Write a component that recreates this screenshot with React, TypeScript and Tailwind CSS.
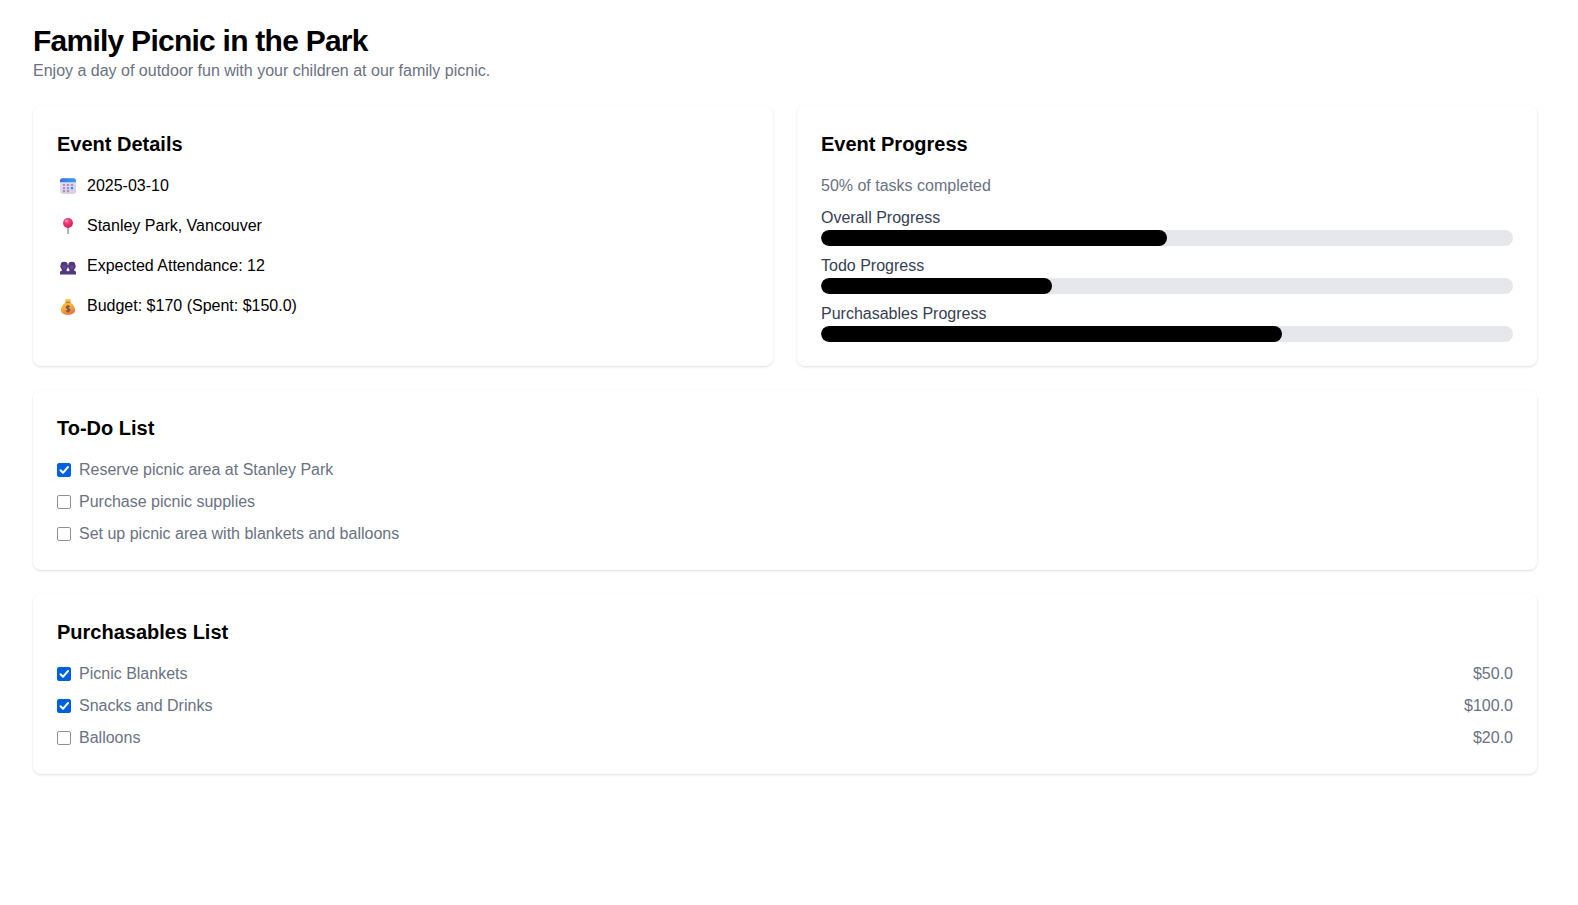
import { useState, type ReactNode } from "react";

type Item = { id: string; name: string; done: boolean; cost?: string };

const todos: Item[] = [
  { id: "reserve", name: "Reserve picnic area at Stanley Park", done: true },
  { id: "supplies", name: "Purchase picnic supplies", done: false },
  { id: "setup", name: "Set up picnic area with blankets and balloons", done: false },
];

const purchasables: Item[] = [
  { id: "blankets", name: "Picnic Blankets", done: true, cost: "$50.0" },
  { id: "snacks", name: "Snacks and Drinks", done: true, cost: "$100.0" },
  { id: "balloons", name: "Balloons", done: false, cost: "$20.0" },
];

const progress = [
  { label: "Overall Progress", value: 50 },
  { label: "Todo Progress", value: 33.33 },
  { label: "Purchasables Progress", value: 66.67 },
];

function CalendarIcon() {
  return (
    <svg viewBox="0 0 22 24" className="h-6 w-[22px] shrink-0" aria-hidden="true">
      <defs>
        <linearGradient id="cal-top" x1="0" x2="1">
          <stop offset="0" stopColor="#3d6fe8" />
          <stop offset="1" stopColor="#38a0f5" />
        </linearGradient>
        <linearGradient id="cal-page" x1="0" x2="1" y1="0" y2="1">
          <stop offset="0" stopColor="#e8e0f6" />
          <stop offset="1" stopColor="#dccbea" />
        </linearGradient>
      </defs>
      <rect x="3" y="4.300" width="16" height="15.700" rx="2.500" fill="url(#cal-page)" />
      <path d="M3 8.300V6.800a2.500 2.500 0 0 1 2.500-2.500h11A2.500 2.500 0 0 1 19 6.800v1.500Z" fill="url(#cal-top)" />
      <g fill="#a295b8">
        <rect x="5.800" y="9.900" width="2.300" height="2.200" rx=".3" />
        <rect x="9.800" y="9.900" width="2.300" height="2.200" rx=".3" />
        <rect x="13.800" y="9.900" width="2.300" height="2.200" rx=".3" />
        <rect x="5.800" y="13" width="2.300" height="2.200" rx=".3" />
        <rect x="9.800" y="13" width="2.300" height="2.200" rx=".3" />
        <rect x="5.800" y="16.100" width="2.300" height="2.200" rx=".3" />
        <rect x="9.800" y="16.100" width="2.300" height="2.200" rx=".3" />
      </g>
      <rect x="13.800" y="13" width="2.300" height="2.200" rx=".3" fill="#1f93ee" />
    </svg>
  );
}

function PinIcon() {
  return (
    <svg viewBox="0 0 22 24" className="h-6 w-[22px] shrink-0" aria-hidden="true">
      <defs>
        <radialGradient id="pin-head" cx="0.4" cy="0.3" r="0.7">
          <stop offset="0" stopColor="#ff6a96" />
          <stop offset="0.5" stopColor="#f0306a" />
          <stop offset="1" stopColor="#c91f62" />
        </radialGradient>
      </defs>
      <path d="M10.300 12h1.600v7.200l-.8 1-.8-1Z" fill="#a9a3b3" />
      <circle cx="11" cy="9" r="4.900" fill="url(#pin-head)" />
      <ellipse cx="9.500" cy="7.100" rx="1.400" ry="1" fill="#ff9ab8" />
    </svg>
  );
}

function PeopleIcon() {
  return (
    <svg viewBox="0 0 22 24" className="h-6 w-[22px] shrink-0" aria-hidden="true">
      <g fill="#533580">
        <path d="M3.600 11.400C3.600 8.800 5 7.800 7.200 7.800s3.600 1 3.600 3.600c.5.200.5 1.700-.1 2-.2 1-.7 1.800-1.300 2.300v.8c1.200.4 1.800.9 1.800 2.100v2H3v-2c0-1.200.8-1.700 2-2.100v-.8c-.6-.5-1.100-1.300-1.300-2.300-.6-.3-.6-1.800-.1-2Z" />
        <path d="M11.200 11.400c0-2.600 1.400-3.600 3.600-3.600s3.600 1 3.600 3.600c.5.200.5 1.700-.1 2-.2 1-.7 1.800-1.300 2.300v.8c1.200.4 2 .9 2 2.100v2h-8.100v-2c0-1.200.7-1.700 1.700-2.100v-.8c-.6-.5-1.100-1.300-1.300-2.300-.6-.3-.6-1.800-.1-2Z" />
      </g>
      <path d="M5.100 11.600h4.100c0 2.200-.5 3.500-2 3.500s-2.100-1.300-2.100-3.500Zm7.700 0h4.100c0 2.200-.6 3.500-2.100 3.500s-2-1.300-2-3.500Z" fill="#67488f" />
    </svg>
  );
}

function MoneyBagIcon() {
  return (
    <svg viewBox="0 0 22 24" className="h-6 w-[22px] shrink-0" aria-hidden="true">
      <defs>
        <linearGradient id="bag-body" x1="0" x2="0.4" y1="0" y2="1">
          <stop offset="0" stopColor="#ffc345" />
          <stop offset="0.6" stopColor="#f6ae3c" />
          <stop offset="1" stopColor="#e67c3e" />
        </linearGradient>
      </defs>
      <path d="M8.300 5.400c1-.5 1.500 0 2.700 0s1.700-.5 2.700 0c.5.400.2 1-.2 1.600L13 8.500c2.800 1.100 5 4.300 5 7.500 0 3.400-2.500 4.700-7 4.700s-7-1.300-7-4.700c0-3.200 2.200-6.400 5-7.500L8.500 7c-.4-.6-.7-1.200-.2-1.600Z" fill="url(#bag-body)" />
      <path d="M8.900 8.300h4.200" stroke="#b3702f" strokeWidth="1" strokeLinecap="round" />
      <path d="M12.700 12.900c-.4-.7-1-.9-1.700-.9-1 0-1.700.5-1.700 1.300 0 1.700 3.500.9 3.500 2.800 0 .9-.8 1.400-1.800 1.400-.9 0-1.500-.3-1.900-1M11 11v7.500" fill="none" stroke="#705548" strokeWidth="1.200" />
    </svg>
  );
}

function Card({ title, children }: { title: string; children: ReactNode }) {
  return (
    <section className="rounded-lg bg-white p-6 shadow-sm">
      <h2 className="mb-4 text-xl font-semibold">{title}</h2>
      {children}
    </section>
  );
}

function Detail({ icon, children }: { icon: ReactNode; children: ReactNode }) {
  return (
    <li className="flex items-center gap-2">
      {icon}
      <span>{children}</span>
    </li>
  );
}

function Checklist({ items: initial }: { items: Item[] }) {
  const [items, setItems] = useState(initial);
  const toggle = (id: string) =>
    setItems(items.map((item) => (item.id === id ? { ...item, done: !item.done } : item)));

  return (
    <ul className="space-y-2 text-gray-500">
      {items.map((item) => (
        <li key={item.id} className="flex items-center justify-between">
          <div className="flex items-center gap-2">
            <span className="relative flex size-3.5">
              <input
                id={item.id}
                type="checkbox"
                checked={item.done}
                onChange={() => toggle(item.id)}
                className="peer size-3.5 appearance-none rounded-xs border border-[#8f8f9d] bg-white checked:border-[#0060df] checked:bg-[#0060df]"
              />
              <svg
                viewBox="0 0 14 14"
                className="pointer-events-none absolute inset-0 hidden size-3.5 peer-checked:block"
                aria-hidden="true"
              >
                <path d="M3.500 7.300 6 9.800l5-5.800" fill="none" stroke="#fff" strokeWidth="2" strokeLinecap="round" strokeLinejoin="round" />
              </svg>
            </span>
            <label htmlFor={item.id}>{item.name}</label>
          </div>
          {item.cost && <span>{item.cost}</span>}
        </li>
      ))}
    </ul>
  );
}

export default function App() {
  return (
    <main className="pt-[23px] pr-[41px] pb-8 pl-[33px] font-['Liberation_Sans',Arial,sans-serif] text-base text-black">
      <header className="mb-[23px]">
        <h1 className="text-3xl font-bold tracking-tight">Family Picnic in the Park</h1>
        <p className="text-gray-500">Enjoy a day of outdoor fun with your children at our family picnic.</p>
      </header>

      <div className="space-y-6">
        <div className="grid gap-6 md:grid-cols-2">
          <Card title="Event Details">
            <ul className="space-y-4">
              <Detail icon={<CalendarIcon />}>2025-03-10</Detail>
              <Detail icon={<PinIcon />}>Stanley Park, Vancouver</Detail>
              <Detail icon={<PeopleIcon />}>Expected Attendance: 12</Detail>
              <Detail icon={<MoneyBagIcon />}>Budget: $170 (Spent: $150.0)</Detail>
            </ul>
          </Card>

          <Card title="Event Progress">
            <div className="space-y-2">
              <p className="text-gray-500">50% of tasks completed</p>
              {progress.map(({ label, value }) => (
                <div key={label}>
                  <p className="text-gray-700">{label}</p>
                  <div
                    role="progressbar"
                    aria-label={label}
                    aria-valuenow={value}
                    className="h-4 overflow-hidden rounded-full bg-gray-200"
                  >
                    <div className="h-full rounded-full bg-black" style={{ width: `${value}%` }} />
                  </div>
                </div>
              ))}
            </div>
          </Card>
        </div>

        <Card title="To-Do List">
          <Checklist items={todos} />
        </Card>

        <Card title="Purchasables List">
          <Checklist items={purchasables} />
        </Card>
      </div>
    </main>
  );
}
